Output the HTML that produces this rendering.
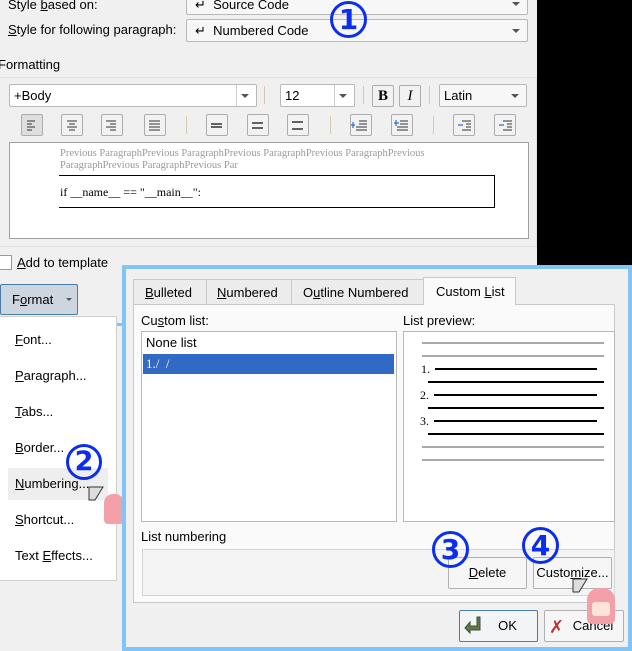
<!DOCTYPE html>
<html><head><meta charset="utf-8"><style>
*{box-sizing:border-box;margin:0;padding:0}
body{width:632px;height:651px;overflow:hidden;background:#f0f0f0;position:relative;font-family:"Liberation Sans","DejaVu Sans",sans-serif;font-size:13px;color:#000}
.a{position:absolute}
.t{position:absolute;white-space:nowrap;line-height:16px}
.combo{position:absolute;background:#f7f7f7;border:1px solid #b8b8b8;border-radius:2px}
.combo.w{background:#fff}
.arr{position:absolute;right:7px;top:50%;margin-top:-2px;width:0;height:0;border-left:4px solid transparent;border-right:4px solid transparent;border-top:4px solid #555}
.btn{position:absolute;background:#f2f2f2;border:1px solid #adadad;border-radius:2px;width:22px;height:22px}
.sep{position:absolute;width:1px;height:18px;background:#d8c8b0}
.ln{position:absolute;height:2px;background:#000}
.gl{position:absolute;height:2px;background:#a8a8a8;left:422px;width:182px}
.circ{position:absolute;border:3px solid #0a2df0;border-radius:50%;color:#0a2df0;font-weight:bold;text-align:center;font-family:"DejaVu Sans",sans-serif;background:transparent}
.pb{position:absolute;background:#f6f6f6;border:1px solid #b0b0b0;border-radius:2px;text-align:center;line-height:30px}
u{text-decoration:underline}
</style></head><body>
<div class="a" style="left:537px;top:0;width:95px;height:267px;background:#000"></div>

<div class="t" style="left:8px;top:-3px">Style <u>b</u>ased on:</div>
<div class="combo" style="left:186px;top:-8px;width:342px;height:23px"><span class="t" style="left:8px;top:4px">↵&nbsp; Source Code</span><div class="arr"></div></div>
<div class="t" style="left:8px;top:22px"><u>S</u>tyle for following paragraph:</div>
<div class="combo" style="left:186px;top:19px;width:342px;height:23px"><span class="t" style="left:8px;top:3px">↵&nbsp; Numbered Code</span><div class="arr"></div></div>
<div class="circ" style="left:330px;top:1px;width:37px;height:37px;font-size:28px;line-height:31px">1</div>

<div class="t" style="left:-2px;top:57px">Formatting</div>
<div class="a" style="left:0;top:77px;width:537px;height:170px;border:1px solid #e2e2e2;border-left:none"></div>
<div class="combo w" style="left:9px;top:84px;width:248px;height:23px"><span class="t" style="left:4px;top:3px">+Body</span><div style="position:absolute;right:0;top:0;width:20px;height:21px;border-left:1px solid #ccc"></div><div class="arr"></div></div>
<div class="sep" style="left:264px;top:86px"></div>
<div class="combo w" style="left:280px;top:84px;width:75px;height:23px"><span class="t" style="left:4px;top:3px">12</span><div style="position:absolute;right:0;top:0;width:20px;height:21px;border-left:1px solid #ccc"></div><div class="arr"></div></div>
<div class="sep" style="left:363px;top:86px"></div>
<div class="btn" style="left:372px;top:85px;font-family:'Liberation Serif',serif;font-weight:bold;font-size:15px;text-align:center;line-height:20px">B</div>
<div class="btn" style="left:399px;top:85px;font-family:'Liberation Serif',serif;font-style:italic;font-size:15px;text-align:center;line-height:20px">I</div>
<div class="sep" style="left:429px;top:86px"></div>
<div class="combo" style="left:439px;top:84px;width:88px;height:23px"><span class="t" style="left:4px;top:3px">Latin</span><div class="arr"></div></div>

<div class="btn" style="left:21px;top:114px;background:#dedede"></div>
<div class="btn" style="left:61px;top:114px"></div>
<div class="btn" style="left:101px;top:114px"></div>
<div class="btn" style="left:144px;top:114px"></div>
<div class="sep" style="left:186px;top:116px"></div>
<div class="btn" style="left:206px;top:114px"></div>
<div class="btn" style="left:247px;top:114px"></div>
<div class="btn" style="left:287px;top:114px"></div>
<div class="sep" style="left:330px;top:116px"></div>
<div class="btn" style="left:350px;top:114px"></div>
<div class="btn" style="left:391px;top:114px"></div>
<div class="sep" style="left:433px;top:116px"></div>
<div class="btn" style="left:453px;top:114px"></div>
<div class="btn" style="left:494px;top:114px"></div>
<svg class="a" style="left:0;top:0" width="537" height="140">
<g stroke="#333" stroke-width="1">
<path d="M27 121h8M27 124h5M27 127h8M27 130h5"/>
<path d="M67 121h10M69 124h6M67 127h10M69 130h6"/>
<path d="M106 121h10M110 124h6M106 127h10M110 130h6"/>
<path d="M149 121h11M149 124h11M149 127h11M149 130h11"/>
<path d="M211 124h11M211 127h11" stroke-width="1.4"/>
<path d="M252 123h11M252 128h11" stroke-width="1.4"/>
<path d="M292 122h11M292 129h11" stroke-width="1.4"/>
<path d="M359 121h8M359 124h8M356 127h11M356 130h11"/>
<path d="M400 121h8M400 124h8M397 127h11M397 130h11"/>
<path d="M462 121h9M466 124h5M466 127h5M462 130h9"/>
<path d="M503 121h9M507 124h5M507 127h5M503 130h9"/>
</g>
<g stroke="#2a6ee0" stroke-width="1.2"><path d="M353 122v6M351 125h4M394 123h5M396 120v6M458 125h5M499 125h5"/></g>
</svg>

<div class="a" style="left:9px;top:142px;width:520px;height:97px;background:#fff;border:1px solid #a0a0a0"></div>
<div class="t" style="left:60px;top:148px;font-family:'Liberation Serif',serif;font-size:10.5px;color:#999;line-height:12px">Previous ParagraphPrevious ParagraphPrevious ParagraphPrevious ParagraphPrevious<br>ParagraphPrevious ParagraphPrevious Par</div>
<div class="a" style="left:59px;top:175px;width:436px;height:33px;border:1px solid #000;border-left:none"></div>
<div class="t" style="left:60px;top:184px;font-family:'Liberation Serif',serif;font-size:12px">if __name__ == "__main__":</div>

<div class="a" style="left:-2px;top:255px;width:14px;height:15px;background:#fff;border:1px solid #999"></div>
<div class="t" style="left:17px;top:255px"><u>A</u>dd to template</div>

<div class="a" style="left:0;top:284px;width:78px;height:31px;background:#cdd5de;border:1px solid #4a7ca8;border-radius:2px"></div>
<div class="t" style="left:12px;top:292px">F<u>o</u>rmat</div>
<div class="a" style="left:66px;top:298px;border-left:3px solid transparent;border-right:3px solid transparent;border-top:3px solid #555"></div>
<div class="a" style="left:117px;top:323px;width:8px;height:3px;background:#80c4f8"></div>
<div class="a" style="left:-1px;top:316px;width:118px;height:265px;background:#fff;border:1px solid #d0d0d0"></div>
<div class="a" style="left:8px;top:468px;width:100px;height:32px;background:#eeeeee"></div>
<div class="t" style="left:15px;top:332px"><u>F</u>ont...</div>
<div class="t" style="left:15px;top:368px"><u>P</u>aragraph...</div>
<div class="t" style="left:15px;top:404px"><u>T</u>abs...</div>
<div class="t" style="left:15px;top:440px"><u>B</u>order...</div>
<div class="t" style="left:15px;top:476px"><u>N</u>umbering...</div>
<div class="t" style="left:15px;top:512px"><u>S</u>hortcut...</div>
<div class="t" style="left:15px;top:548px">Text <u>E</u>ffects...</div>
<div class="circ" style="left:66px;top:444px;width:36px;height:36px;font-size:27px;line-height:30px">2</div>
<svg class="a" style="left:88px;top:486px" width="18" height="16"><path d="M1 1h14l-8 13H1z" fill="#ddd" stroke="#333"/></svg>
<div class="a" style="left:104px;top:494px;width:20px;height:30px;background:#f4a0a8;border-radius:9px 9px 4px 4px"></div>

<div class="a" style="left:122px;top:265px;width:510px;height:386px;background:#f0f0f0;border:4px solid #80c4f8"></div>
<div class="a" style="left:133px;top:304px;width:482px;height:299px;background:#fafafa;border:1px solid #c8c8c8"></div>
<div class="a" style="left:133px;top:279px;width:74px;height:26px;background:#ececec;border:1px solid #c8c8c8"></div>
<div class="a" style="left:206px;top:279px;width:86px;height:26px;background:#ececec;border:1px solid #c8c8c8"></div>
<div class="a" style="left:291px;top:279px;width:133px;height:26px;background:#ececec;border:1px solid #c8c8c8"></div>
<div class="a" style="left:423px;top:277px;width:93px;height:28px;background:#fafafa;border:1px solid #c8c8c8;border-bottom:none"></div>
<div class="t" style="left:145px;top:285px"><u>B</u>ulleted</div>
<div class="t" style="left:217px;top:285px"><u>N</u>umbered</div>
<div class="t" style="left:303px;top:285px">O<u>u</u>tline Numbered</div>
<div class="t" style="left:436px;top:284px">Custom <u>L</u>ist</div>

<div class="t" style="left:141px;top:313px">Cu<u>s</u>tom list:</div>
<div class="t" style="left:403px;top:313px">List preview:</div>
<div class="a" style="left:141px;top:331px;width:256px;height:191px;background:#fff;border:1px solid #b8b8b8"></div>
<div class="t" style="left:146px;top:335px">None list</div>
<div class="a" style="left:143px;top:354px;width:251px;height:20px;background:#316ac5"></div>
<div class="t" style="left:146px;top:356px;color:#fff;font-family:'Liberation Serif',serif">1./&nbsp; /</div>
<div class="a" style="left:403px;top:331px;width:212px;height:191px;background:#fff;border:1px solid #b8b8b8"></div>
<div class="gl" style="top:342px"></div><div class="gl" style="top:355px"></div>
<div class="t" style="left:421px;top:361px;font-family:'Liberation Serif',serif;font-size:12px">1.</div>
<div class="ln" style="left:435px;top:368px;width:162px"></div>
<div class="ln" style="left:428px;top:381px;width:176px"></div>
<div class="t" style="left:420px;top:387px;font-family:'Liberation Serif',serif;font-size:12px">2.</div>
<div class="ln" style="left:434px;top:394px;width:163px"></div>
<div class="ln" style="left:428px;top:407px;width:176px"></div>
<div class="t" style="left:420px;top:413px;font-family:'Liberation Serif',serif;font-size:12px">3.</div>
<div class="ln" style="left:434px;top:420px;width:163px"></div>
<div class="ln" style="left:428px;top:433px;width:176px"></div>
<div class="gl" style="top:446px"></div><div class="gl" style="top:459px"></div>

<div class="t" style="left:141px;top:529px">List numbering</div>
<div class="a" style="left:142px;top:549px;width:473px;height:47px;background:#f4f4f4;border:1px solid #d4d4d4"></div>
<div class="pb" style="left:448px;top:557px;width:79px;height:32px"><u>D</u>elete</div>
<div class="pb" style="left:533px;top:557px;width:79px;height:32px">Custo<u>m</u>ize...</div>
<div class="circ" style="left:432px;top:531px;width:37px;height:37px;font-size:28px;line-height:31px">3</div>
<div class="circ" style="left:522px;top:527px;width:37px;height:37px;font-size:28px;line-height:31px">4</div>
<svg class="a" style="left:572px;top:578px" width="18" height="16"><path d="M1 1h14l-8 13H1z" fill="#ddd" stroke="#333"/></svg>

<div class="pb" style="left:459px;top:610px;width:79px;height:32px;border-color:#4a7ca8;background:#f2f4f6;padding-left:18px">OK</div>
<svg class="a" style="left:463px;top:615px" width="20" height="20"><path d="M14 2v9H7V7l-5 6 5 5v-3h10V2z" fill="#5f7a4a" stroke="#3d5030"/></svg>
<div class="pb" style="left:544px;top:610px;width:80px;height:32px;padding-left:18px">Cancel</div>
<div class="a" style="left:549px;top:618px;color:#c03030;font-size:18px;font-weight:bold;line-height:18px">✗</div>
<div class="a" style="left:587px;top:588px;width:28px;height:36px;background:#f4a0a8;border-radius:12px 12px 5px 5px"></div>
<div class="a" style="left:592px;top:602px;width:18px;height:14px;background:#fde4d8;border-radius:3px"></div>
</body></html>
